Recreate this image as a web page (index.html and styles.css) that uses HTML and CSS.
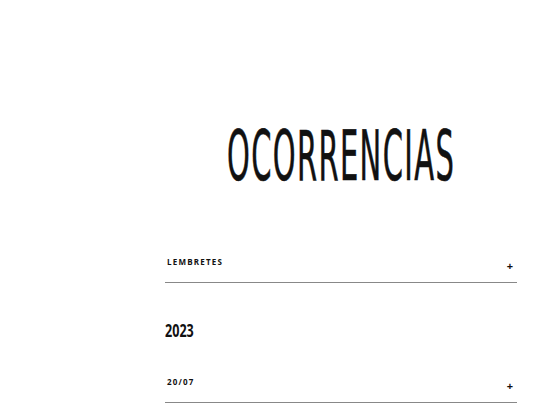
FILE: index.html
```html
<!DOCTYPE html>
<html>
<head>
<meta charset="utf-8">
<link rel="stylesheet" href="styles.css">
</head>
<body>
<main class="page">
  <h1 class="title"><span class="title-text">OCORRENCIAS</span></h1>
  <div class="row">
    <span class="row-label">LEMBRETES</span>
    <span class="row-plus">+</span>
  </div>
  <h2 class="year"><span class="year-text">2023</span></h2>
  <div class="row">
    <span class="row-label">20/07</span>
    <span class="row-plus">+</span>
  </div>
</main>
</body>
</html>
```
FILE: styles.css
```css
html, body {
  margin: 0;
  padding: 0;
  background: #ffffff;
}
.page {
  margin-left: 165px;
  width: 352px;
  display: flex;
  flex-direction: column;
  font-family: "Open Sans", "Noto Sans", sans-serif;
  color: #111;
}
.title {
  margin: 119px 0 0 0;
  height: 74px;
  display: flex;
  justify-content: center;
  font-weight: 400;
}
.title-text {
  font-family: "DejaVu Sans", sans-serif;
  font-stretch: condensed;
  font-size: 70px;
  line-height: 74px;
  letter-spacing: 3px;
  transform: scaleX(0.46);
  display: inline-block;
  white-space: nowrap;
  -webkit-text-stroke: 0.6px #111;
}
.row {
  display: flex;
  justify-content: space-between;
  align-items: flex-start;
  border-bottom: 1px solid #888;
  padding: 0 4px 0 2px;
  height: 26px;
}
.title + .row { margin-top: 63px; }
.row-label {
  font-size: 8px;
  font-weight: 700;
  letter-spacing: 1.2px;
  line-height: 10px;
  margin-top: 1px;
}
.row-plus {
  font-size: 11px;
  font-weight: 700;
  line-height: 11px;
  margin-top: 4px;
}
.year {
  margin: 28px 0 0 0;
  height: 65px;
  font-weight: 700;
}
.year-text {
  display: inline-block;
  font-size: 17px;
  line-height: 20px;
  transform: scaleX(0.74);
  transform-origin: left center;
}
```
